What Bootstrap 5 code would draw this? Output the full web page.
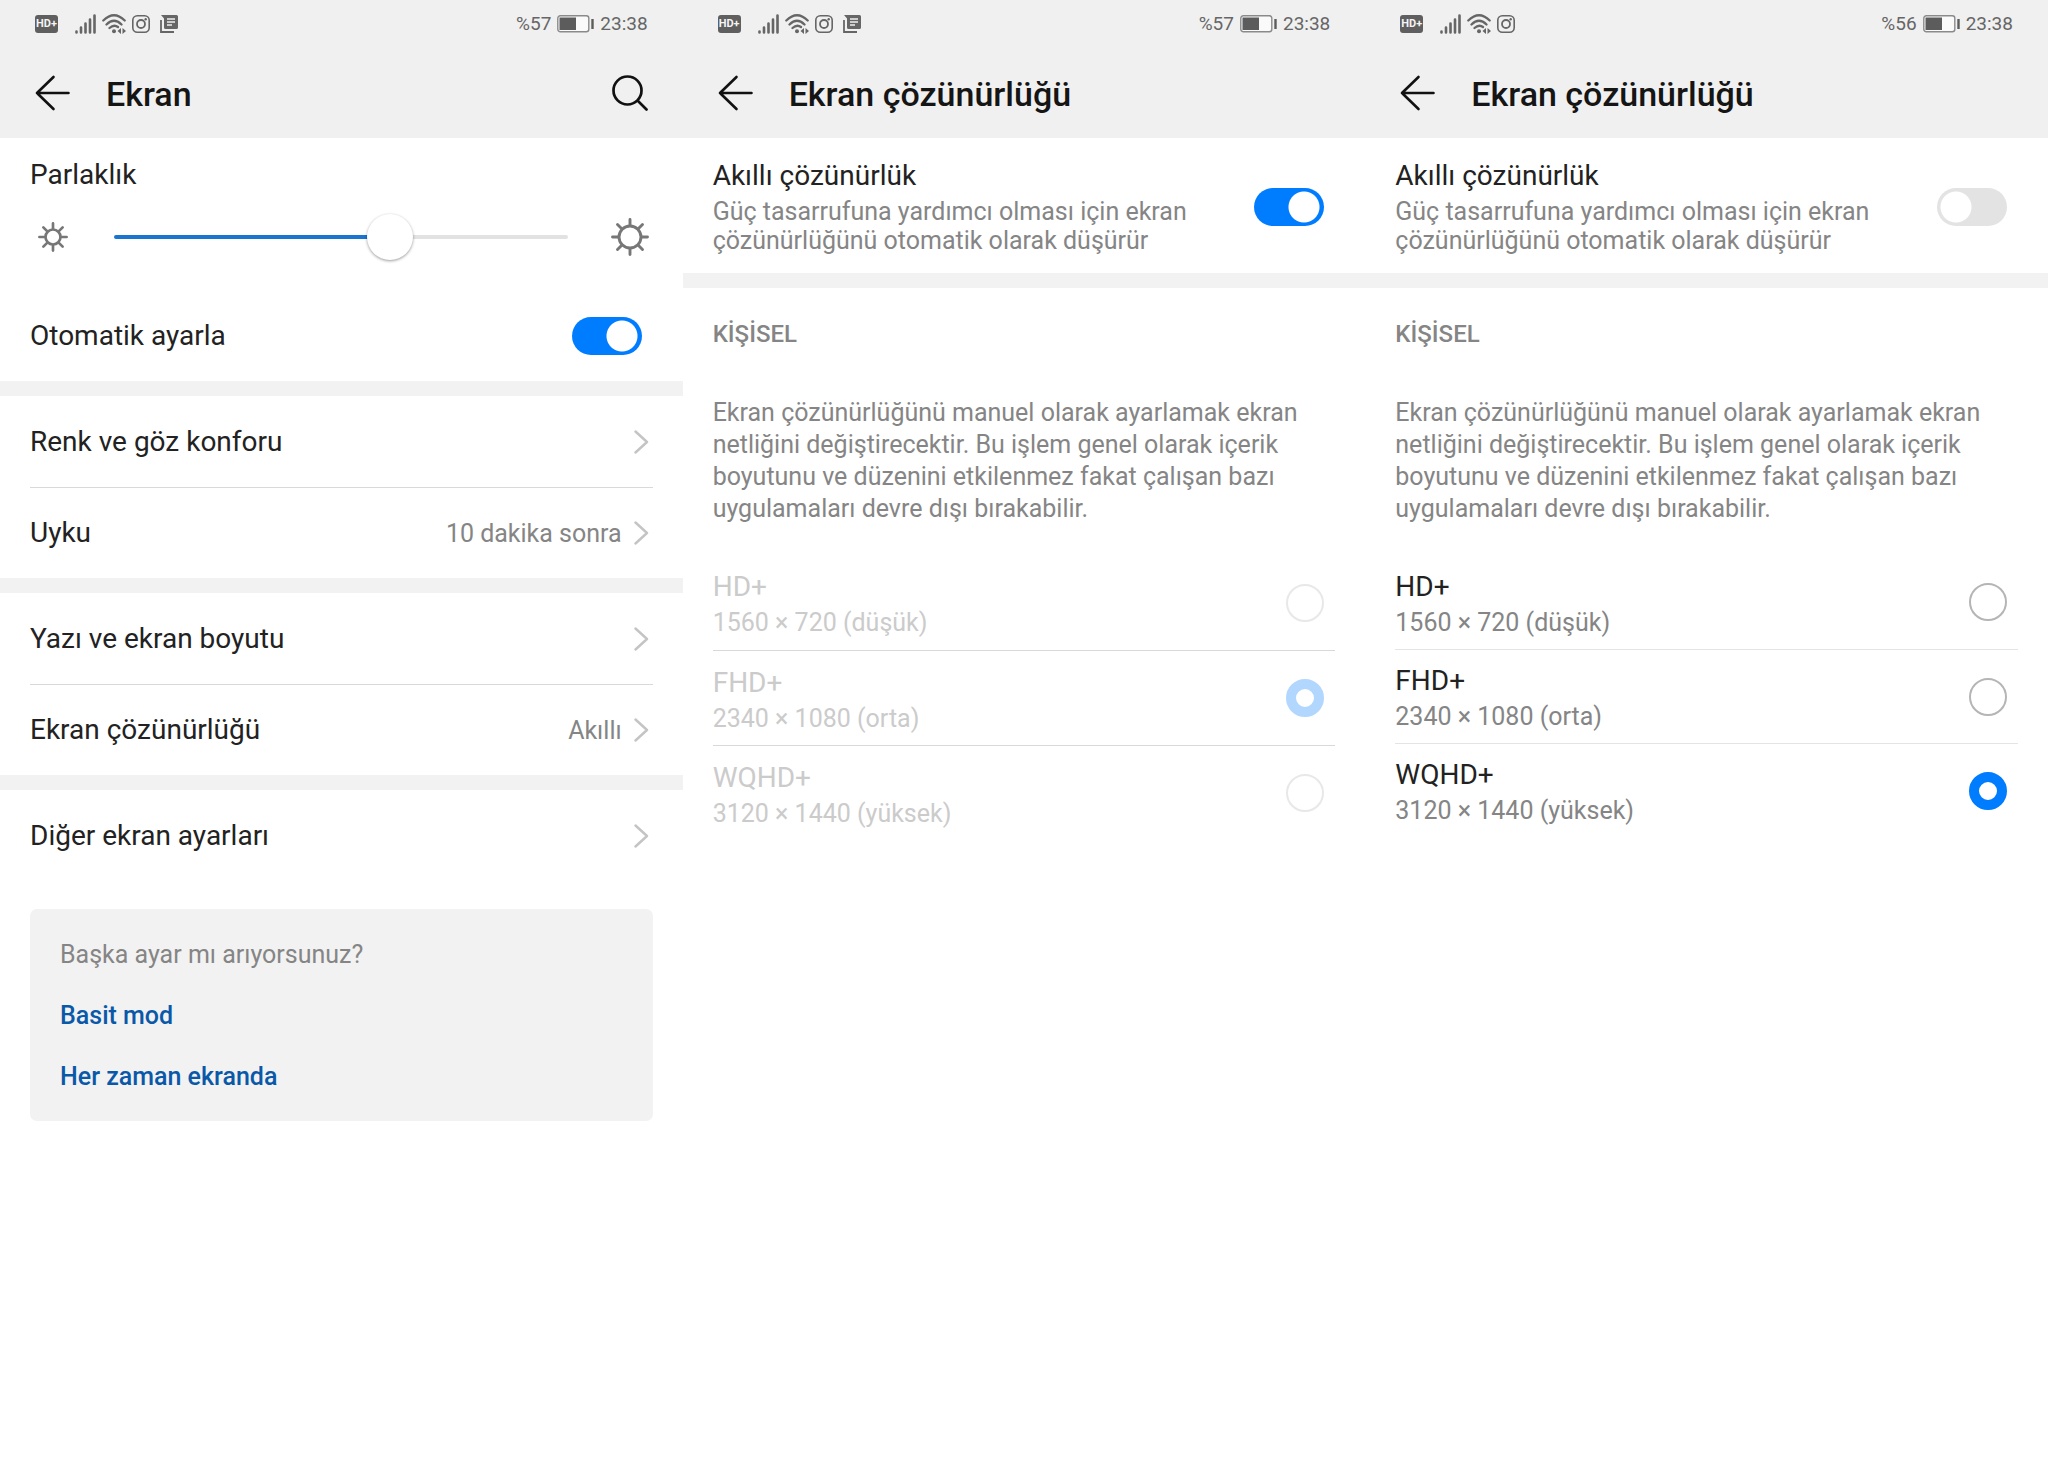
<!DOCTYPE html>
<html lang="tr">
<head>
<meta charset="utf-8">
<meta name="viewport" content="width=device-width, initial-scale=1">
<title>Ekran ayarları</title>
<link href="https://cdn.jsdelivr.net/npm/bootstrap@5.3.0/dist/css/bootstrap.min.css" rel="stylesheet">
<style>
  :root { --accent: #007dff; --ink: #222; --muted-ink: #858585; --bar: #f0f0f0; --band: #f2f2f2; --rule: #d9d9d9; }
  body { font-family: Roboto, "Noto Sans", sans-serif; color: var(--ink); background: #fff; }
  .phone-top { background: var(--bar); height: 138px; }
  .status { height: 48px; padding: 0 35px; color: #666; font-size: 19px; line-height: 24px; }
  .status svg, .titlebar svg { display: block; }
  .hd-chip { width: 23px; height: 18px; border-radius: 3px; background: #5f5f5f; color: #f4f4f4; font-size: 11px; line-height: 18px; font-weight: 700; text-align: center; margin-right: 11px; }
  .status-icons { gap: 6px; }
  .status-icons svg { flex-shrink: 0; }
  .titlebar { height: 90px; padding: 0 35px; }
  .titlebar h1 { font-size: 34px; line-height: 40px; font-weight: 500; color: #151515; margin: 2px 0 0 35px; }
  .plain-btn { border: 0; background: none; padding: 0; color: #111; }
  .gutter { padding-left: 30px; padding-right: 30px; }
  .item-title { font-size: 28px; line-height: 34px; }
  .item-sub { font-size: 25px; line-height: 29px; color: var(--muted-ink); }
  .item-row { min-height: 91px; color: var(--ink); text-decoration: none; }
  .item-row + .item-row { border-top: 1px solid var(--rule); }
  .item-row svg { margin: 0 4px 0 12px; }
  .band { height: 15px; background: var(--band); }
  .control-end { margin-right: 11px !important; }

  .form-check-input.toggle { width: 70px; height: 38px; margin: 0; border: 0; border-radius: 19px; background-color: #e3e3e3; background-image: radial-gradient(circle, #fff 15px, transparent 16px); background-size: 32px 32px; background-repeat: no-repeat; background-position: left 3px center; }
  .form-check-input.toggle:checked { background-color: var(--accent); background-image: radial-gradient(circle, #fff 15px, transparent 16px); background-position: right 4px center; }

  .brightness { height: 46px; margin-top: 22px; margin-bottom: 30px; color: #777; }
  .brightness input { appearance: none; -webkit-appearance: none; height: 46px; background: none; margin: 0 43px 0 46px; min-width: 0; }
  .brightness input::-webkit-slider-runnable-track { height: 4px; border-radius: 2px; background: linear-gradient(to right, #1a75d1 61%, #e2e2e2 61%); }
  .brightness input::-webkit-slider-thumb { -webkit-appearance: none; width: 46px; height: 46px; margin-top: -21px; border-radius: 50%; background: #fff; box-shadow: 0 1px 3px rgba(0,0,0,.4); }

  .hint { background: var(--band); border-radius: 7px; margin: 28px 30px 0; padding: 30px 30px 28px; font-size: 25px; line-height: 32px; gap: 29px; color: var(--muted-ink); }
  .hint a { color: #0a59a8; font-weight: 500; text-decoration: none; }

  .smart { padding-top: 21px; padding-bottom: 18px; }
  .smart-text { width: 480px; }
  .group-head { font-size: 24px; line-height: 32px; font-weight: 500; color: var(--muted-ink); margin: 30px 0 47px; }
  .group-note { font-size: 25px; line-height: 32px; color: var(--muted-ink); margin: 0 0 30px; }
  .choice { height: 95px; }
  .choice label { padding-top: 2px; }
  .choice + .choice { border-top: 1px solid var(--rule); }
  .form-check-input.dot { width: 38px; height: 38px; margin: 0; border: 2px solid #b5b5b5; background-color: #fff; }
  .form-check-input.dot:checked { border: 10px solid var(--accent); background: #fff; }
  .form-check-input.dot:disabled { opacity: .3; }
  .choices-off .item-title, .choices-off .item-sub { color: #cbcbcb; }
  .choices-on { --rule: #e4e4e4; }
  .choices-on .choice { height: 94px; }
</style>
<script src="https://cdn.jsdelivr.net/npm/bootstrap@5.3.0/dist/js/bootstrap.bundle.min.js"></script>
</head>
<body>
<svg width="0" height="0" class="position-absolute" aria-hidden="true">
  <symbol id="signal" viewBox="0 0 21 20"><path d="M1.500 17.500v1M6 13.500v5M10.500 9.500v9M15 5.500v13M19.500 1.500v17" stroke="currentColor" stroke-width="2.600" stroke-linecap="round" fill="none"/></symbol>
  <symbol id="wifi" viewBox="0 0 24 20"><path d="M1.300 6.500Q12-4 22.700 6.500M4.500 10.500Q12 3 19.500 10.500M7.500 14Q12 10 16 13" stroke="currentColor" stroke-width="2.300" stroke-linecap="round" fill="none"/><circle cx="12" cy="17.300" r="2" fill="currentColor"/><path d="M15.500 17l3.500-3v6zM24 17l-3.500-3v6z" fill="currentColor"/></symbol>
  <symbol id="insta" viewBox="0 0 18 18"><g fill="none" stroke="currentColor"><rect x=".8" y=".8" width="16.400" height="16.400" rx="4.500" stroke-width="1.600"/><circle cx="9" cy="9" r="4" stroke-width="1.800"/></g><circle cx="13.700" cy="4.300" r="1.200" fill="currentColor"/></symbol>
  <symbol id="news" viewBox="0 0 18 18"><path d="M1 5v12h13" fill="none" stroke="currentColor" stroke-width="1.800"/><path d="M1 0h15.500Q18 0 18 1.500v11Q18 14 16.500 14H5.500Q4 14 4 12.500V3.500z" fill="currentColor"/><path d="M7 4h8M7 7h8M7 10h5" stroke="#f0f0f0" stroke-width="1.500"/></symbol>
  <symbol id="battery" viewBox="0 0 37 18"><rect x=".8" y=".8" width="31" height="16" rx="2.500" fill="#fafafa" stroke="#8a8a8a" stroke-width="1.400"/><path d="M2.500 2.500h16.500v12.500h-16.500z" fill="#5c5c5c"/><path d="M35.500 4v10" stroke="#5c5c5c" stroke-width="2.400"/></symbol>
  <symbol id="back" viewBox="0 0 36 36"><path d="M18.500 2L2 18l16.500 16M2 18h31.500" fill="none" stroke="currentColor" stroke-width="2.600" stroke-linecap="round" stroke-linejoin="round"/></symbol>
  <symbol id="search" viewBox="0 0 36 36"><circle cx="15.500" cy="15.500" r="14" fill="none" stroke="currentColor" stroke-width="2.700"/><path d="M26 26l8.500 8.500" stroke="currentColor" stroke-width="2.700" stroke-linecap="round"/></symbol>
  <symbol id="sun" viewBox="0 0 38 38"><g fill="none" stroke="currentColor" stroke-width="2.900" stroke-linecap="round"><circle cx="19" cy="19" r="11"/><path d="M19 1.500v6M19 30.500v6M1.500 19h6M30.500 19h6M6.500 6.500l4 4M27.500 27.500l4 4M31.500 6.500l-4 4M10.500 27.500l-4 4"/></g></symbol>
  <symbol id="sun-low" viewBox="0 0 28 28"><g fill="none" stroke="currentColor" stroke-width="2.500" stroke-linecap="round"><circle cx="14" cy="14" r="7"/><path d="M14 1.300v5M14 21.700v5M1.300 14h5M21.700 14h5M5 5l3.500 3.500M19.500 19.500l3.500 3.500M23 5l-3.500 3.500M8.500 19.500l-3.500 3.500"/></g></symbol>
  <symbol id="chev" viewBox="0 0 15 24"><path d="M1.500 1.500L13 12 1.500 22.500" fill="none" stroke="#c4c4c4" stroke-width="2.400" stroke-linecap="round" stroke-linejoin="round"/></symbol>
</svg>

<main class="row row-cols-3 g-0">
  <section class="col">
    <header class="phone-top">
      <div class="status d-flex align-items-center justify-content-between">
        <div class="status-icons d-flex align-items-center">
          <span class="hd-chip">HD+</span>
          <svg width="21" height="20"><use href="#signal"/></svg>
          <svg width="24" height="20"><use href="#wifi"/></svg>
          <svg width="18" height="18"><use href="#insta"/></svg>
          <svg class="ms-1" width="18" height="18"><use href="#news"/></svg>
        </div>
        <div class="status-icons d-flex align-items-center"><span>%57</span><svg width="37" height="18"><use href="#battery"/></svg><span>23:38</span></div>
      </div>
      <div class="titlebar d-flex align-items-center">
        <button class="plain-btn" type="button" aria-label="Geri"><svg width="36" height="36"><use href="#back"/></svg></button>
        <h1>Ekran</h1>
        <button class="plain-btn ms-auto" type="button" aria-label="Ara"><svg width="36" height="36"><use href="#search"/></svg></button>
      </div>
    </header>
    <div class="gutter pt-3">
      <label class="item-title d-block mt-1" for="bright">Parlaklık</label>
      <div class="brightness d-flex align-items-center">
        <svg class="ms-2 flex-shrink-0" width="30" height="30"><use href="#sun-low"/></svg>
        <input class="flex-grow-1" id="bright" type="range" min="0" max="100" value="62">
        <svg class="me-1 flex-shrink-0" width="38" height="38"><use href="#sun"/></svg>
      </div>
      <div class="item-row d-flex align-items-center justify-content-between form-switch p-0">
        <label class="item-title" for="auto">Otomatik ayarla</label>
        <input class="form-check-input toggle control-end" id="auto" type="checkbox" role="switch" checked>
      </div>
    </div>
    <div class="band"></div>
    <nav class="gutter">
      <a class="item-row d-flex align-items-center" href="#"><span class="item-title me-auto">Renk ve göz konforu</span><svg width="15" height="24"><use href="#chev"/></svg></a>
      <a class="item-row d-flex align-items-center" href="#"><span class="item-title me-auto">Uyku</span><span class="item-sub">10 dakika sonra</span><svg width="15" height="24"><use href="#chev"/></svg></a>
    </nav>
    <div class="band"></div>
    <nav class="gutter">
      <a class="item-row d-flex align-items-center" href="#"><span class="item-title me-auto">Yazı ve ekran boyutu</span><svg width="15" height="24"><use href="#chev"/></svg></a>
      <a class="item-row d-flex align-items-center" href="#"><span class="item-title me-auto">Ekran çözünürlüğü</span><span class="item-sub">Akıllı</span><svg width="15" height="24"><use href="#chev"/></svg></a>
    </nav>
    <div class="band"></div>
    <nav class="gutter">
      <a class="item-row d-flex align-items-center" href="#"><span class="item-title me-auto">Diğer ekran ayarları</span><svg width="15" height="24"><use href="#chev"/></svg></a>
    </nav>
    <aside class="hint d-flex flex-column">
      <span>Başka ayar mı arıyorsunuz?</span>
      <a href="#">Basit mod</a>
      <a href="#">Her zaman ekranda</a>
    </aside>
  </section>

  <section class="col">
    <header class="phone-top">
      <div class="status d-flex align-items-center justify-content-between">
        <div class="status-icons d-flex align-items-center">
          <span class="hd-chip">HD+</span>
          <svg width="21" height="20"><use href="#signal"/></svg>
          <svg width="24" height="20"><use href="#wifi"/></svg>
          <svg width="18" height="18"><use href="#insta"/></svg>
          <svg class="ms-1" width="18" height="18"><use href="#news"/></svg>
        </div>
        <div class="status-icons d-flex align-items-center"><span>%57</span><svg width="37" height="18"><use href="#battery"/></svg><span>23:38</span></div>
      </div>
      <div class="titlebar d-flex align-items-center">
        <button class="plain-btn" type="button" aria-label="Geri"><svg width="36" height="36"><use href="#back"/></svg></button>
        <h1>Ekran çözünürlüğü</h1>
      </div>
    </header>
    <div class="smart gutter d-flex align-items-center justify-content-between form-switch">
      <label class="smart-text" for="smart2"><span class="item-title d-block mb-1">Akıllı çözünürlük</span><span class="item-sub d-block">Güç tasarrufuna yardımcı olması için ekran çözünürlüğünü otomatik olarak düşürür</span></label>
      <input class="form-check-input toggle control-end" id="smart2" type="checkbox" role="switch" checked>
    </div>
    <div class="band"></div>
    <div class="gutter choices-off">
      <h2 class="group-head">KİŞİSEL</h2>
      <p class="group-note">Ekran çözünürlüğünü manuel olarak ayarlamak ekran netliğini değiştirecektir. Bu işlem genel olarak içerik boyutunu ve düzenini etkilenmez fakat çalışan bazı uygulamaları devre dışı bırakabilir.</p>
      <div class="choice d-flex align-items-center justify-content-between">
        <label for="a1"><span class="item-title d-block mb-1">HD+</span><span class="item-sub d-block">1560 × 720 (düşük)</span></label>
        <input class="form-check-input dot control-end" type="radio" name="resA" id="a1" disabled>
      </div>
      <div class="choice d-flex align-items-center justify-content-between">
        <label for="a2"><span class="item-title d-block mb-1">FHD+</span><span class="item-sub d-block">2340 × 1080 (orta)</span></label>
        <input class="form-check-input dot control-end" type="radio" name="resA" id="a2" checked disabled>
      </div>
      <div class="choice d-flex align-items-center justify-content-between">
        <label for="a3"><span class="item-title d-block mb-1">WQHD+</span><span class="item-sub d-block">3120 × 1440 (yüksek)</span></label>
        <input class="form-check-input dot control-end" type="radio" name="resA" id="a3" disabled>
      </div>
    </div>
  </section>

  <section class="col">
    <header class="phone-top">
      <div class="status d-flex align-items-center justify-content-between">
        <div class="status-icons d-flex align-items-center">
          <span class="hd-chip">HD+</span>
          <svg width="21" height="20"><use href="#signal"/></svg>
          <svg width="24" height="20"><use href="#wifi"/></svg>
          <svg width="18" height="18"><use href="#insta"/></svg>
        </div>
        <div class="status-icons d-flex align-items-center"><span>%56</span><svg width="37" height="18"><use href="#battery"/></svg><span>23:38</span></div>
      </div>
      <div class="titlebar d-flex align-items-center">
        <button class="plain-btn" type="button" aria-label="Geri"><svg width="36" height="36"><use href="#back"/></svg></button>
        <h1>Ekran çözünürlüğü</h1>
      </div>
    </header>
    <div class="smart gutter d-flex align-items-center justify-content-between form-switch">
      <label class="smart-text" for="smart3"><span class="item-title d-block mb-1">Akıllı çözünürlük</span><span class="item-sub d-block">Güç tasarrufuna yardımcı olması için ekran çözünürlüğünü otomatik olarak düşürür</span></label>
      <input class="form-check-input toggle control-end" id="smart3" type="checkbox" role="switch">
    </div>
    <div class="band"></div>
    <div class="gutter choices-on">
      <h2 class="group-head">KİŞİSEL</h2>
      <p class="group-note">Ekran çözünürlüğünü manuel olarak ayarlamak ekran netliğini değiştirecektir. Bu işlem genel olarak içerik boyutunu ve düzenini etkilenmez fakat çalışan bazı uygulamaları devre dışı bırakabilir.</p>
      <div class="choice d-flex align-items-center justify-content-between">
        <label for="b1"><span class="item-title d-block mb-1">HD+</span><span class="item-sub d-block">1560 × 720 (düşük)</span></label>
        <input class="form-check-input dot control-end" type="radio" name="resB" id="b1">
      </div>
      <div class="choice d-flex align-items-center justify-content-between">
        <label for="b2"><span class="item-title d-block mb-1">FHD+</span><span class="item-sub d-block">2340 × 1080 (orta)</span></label>
        <input class="form-check-input dot control-end" type="radio" name="resB" id="b2">
      </div>
      <div class="choice d-flex align-items-center justify-content-between">
        <label for="b3"><span class="item-title d-block mb-1">WQHD+</span><span class="item-sub d-block">3120 × 1440 (yüksek)</span></label>
        <input class="form-check-input dot control-end" type="radio" name="resB" id="b3" checked>
      </div>
    </div>
  </section>
</main>
</body>
</html>
